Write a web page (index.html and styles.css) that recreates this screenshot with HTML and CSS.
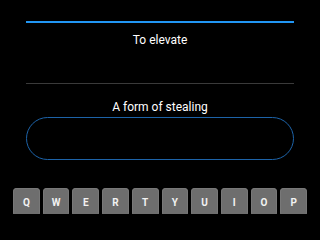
FILE: index.html
```html
<!DOCTYPE html>
<html>
<head>
<meta charset="utf-8">
<link rel="stylesheet" href="styles.css">
</head>
<body>
<div class="screen">
  <div class="content">
    <div class="progress"></div>
    <div class="clue">To elevate</div>
    <div class="divider"></div>
    <div class="clue clue-second">A form of stealing</div>
    <div class="answer"></div>
  </div>
  <div class="keyboard">
    <div class="key">Q</div>
    <div class="key">W</div>
    <div class="key">E</div>
    <div class="key">R</div>
    <div class="key">T</div>
    <div class="key">Y</div>
    <div class="key">U</div>
    <div class="key">I</div>
    <div class="key">O</div>
    <div class="key">P</div>
  </div>
</div>
</body>
</html>
```
FILE: styles.css
```css
html, body {
  margin: 0;
  padding: 0;
  background: #000;
}
.screen {
  width: 320px;
  height: 214px;
  overflow: hidden;
  font-family: Roboto, "Liberation Sans", sans-serif;
  color: #fff;
}
.content {
  padding: 21px 26px 0 26px;
}
.progress {
  height: 2px;
  background: #2196f3;
}
.clue {
  font-size: 12px;
  line-height: 16px;
  text-align: center;
  margin-top: 9px;
}
.divider {
  height: 1px;
  background: #3a3a3a;
  margin-top: 35px;
}
.clue-second {
  margin-top: 15px;
}
.answer {
  margin-top: 2px;
  height: 41px;
  border: 1px solid #1d63a8;
  border-radius: 22px;
}
.keyboard {
  display: flex;
  gap: 3px;
  padding: 0 13px;
  margin-top: 28px;
}
.key {
  flex: 1;
  height: 28px;
  border-radius: 4px;
  background: #6e6e6e;
  box-shadow: inset 0 0 0 1px #787878;
  display: flex;
  align-items: center;
  justify-content: center;
  font-size: 10px;
  font-weight: bold;
  color: #f2f2f2;
}
```
